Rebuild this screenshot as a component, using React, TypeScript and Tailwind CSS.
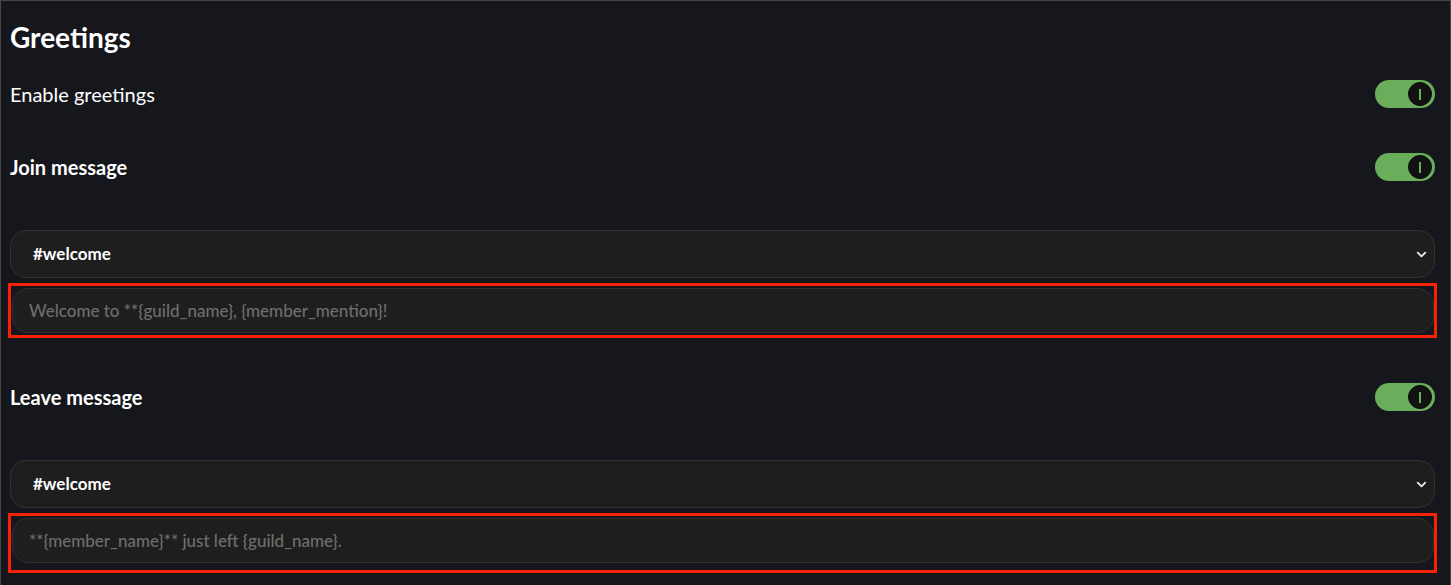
import { ChevronDown } from "lucide-react";

function Toggle() {
  return (
    <div className="relative w-[60px] h-[28px] rounded-full bg-[#6aad5b] shrink-0">
      <div className="absolute right-[3px] top-[2px] w-[24px] h-[24px] rounded-full bg-[#121212] border border-[#0a0a0a] flex items-center justify-center">
        <div className="w-[2px] h-[11px] bg-[#6aad5b]" />
      </div>
    </div>
  );
}

function ChannelSelect() {
  return (
    <div className="h-[48px] rounded-[16px] bg-[#1e1e1f] border border-[#323232] flex items-center justify-between pl-[22px] pr-[5px]">
      <span className="text-[17px] font-bold text-white">#welcome</span>
      <ChevronDown size={15} strokeWidth={3} className="text-[#e8e8e8]" />
    </div>
  );
}

function MessageInput({ text, pb }: { text: string; pb: string }) {
  return (
    <div className={`-mx-[2px] border-[3px] border-[#f52205] pt-[2px] pl-[1px] ${pb}`}>
      <div className="h-[45px] rounded-[16px] bg-[#1e1e1f] border border-[#303030] flex items-center pl-[16px]">
        <span className="text-[17px] font-medium text-[#6e6e6e]">{text}</span>
      </div>
    </div>
  );
}

export default function App() {
  return (
    <div
      className="min-h-[585px] bg-[#16171c] border-t border-l border-r border-[#464646] pl-[9px] pr-[15px] pt-[19px] text-white"
      style={{ fontFamily: "Lato, 'Noto Sans', sans-serif" }}
    >
      <h1 className="text-[28px] font-bold leading-[34px]">Greetings</h1>

      <div className="mt-[26px] h-[28px] flex items-center justify-between">
        <span className="text-[20px]">Enable greetings</span>
        <Toggle />
      </div>

      <div className="mt-[45px] h-[28px] flex items-center justify-between">
        <span className="text-[20px] font-bold">Join message</span>
        <Toggle />
      </div>

      <div className="mt-[49px]">
        <ChannelSelect />
      </div>
      <div className="mt-[5px]">
        <MessageInput text="Welcome to **{guild_name}, {member_mention}!" pb="pb-[2px]" />
      </div>

      <div className="mt-[45px] h-[28px] flex items-center justify-between">
        <span className="text-[20px] font-bold">Leave message</span>
        <Toggle />
      </div>

      <div className="mt-[49px]">
        <ChannelSelect />
      </div>
      <div className="mt-[5px]">
        <MessageInput text="**{member_name}** just left {guild_name}." pb="pb-[7px]" />
      </div>
    </div>
  );
}
